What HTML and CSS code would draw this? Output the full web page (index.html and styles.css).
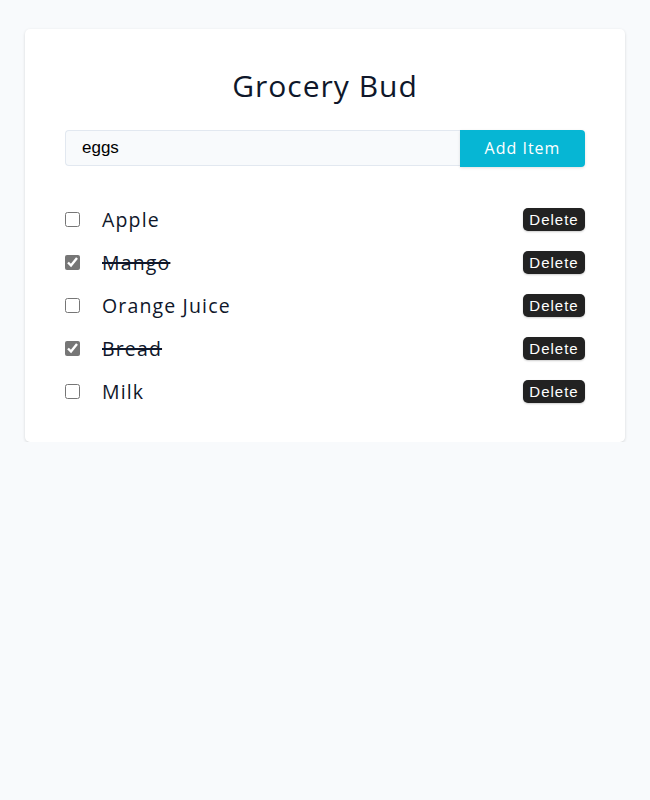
FILE: index.html
```html
<!DOCTYPE html>
<html lang="en">
<head>
<meta charset="utf-8">
<title>Grocery Bud</title>
<link rel="stylesheet" href="styles.css">
</head>
<body>
<main class="card">
  <h1 class="title">Grocery Bud</h1>
  <form class="form">
    <input class="form-input" type="text" value="eggs">
    <button class="btn-add" type="button">Add Item</button>
  </form>
  <ul class="items">
    <li class="item">
      <input type="checkbox" class="check">
      <span class="name">Apple</span>
      <button class="btn-delete" type="button">Delete</button>
    </li>
    <li class="item">
      <input type="checkbox" class="check" checked>
      <span class="name done">Mango</span>
      <button class="btn-delete" type="button">Delete</button>
    </li>
    <li class="item">
      <input type="checkbox" class="check">
      <span class="name">Orange Juice</span>
      <button class="btn-delete" type="button">Delete</button>
    </li>
    <li class="item">
      <input type="checkbox" class="check" checked>
      <span class="name done">Bread</span>
      <button class="btn-delete" type="button">Delete</button>
    </li>
    <li class="item">
      <input type="checkbox" class="check">
      <span class="name">Milk</span>
      <button class="btn-delete" type="button">Delete</button>
    </li>
  </ul>
</main>
</body>
</html>
```
FILE: styles.css
```css
* { box-sizing: border-box; }
body {
  margin: 0;
  background: #f8fafc;
  font-family: "Open Sans", sans-serif;
  color: #0f172a;
}
.card {
  width: 600px;
  margin: 29px auto 0;
  background: #fff;
  border-radius: 5px;
  box-shadow: 0 1px 3px rgba(0,0,0,0.15);
  padding: 38px 40px 29px;
}
.title {
  margin: 0 0 25px;
  text-align: center;
  font-weight: 400;
  font-size: 30px;
  letter-spacing: 1px;
  line-height: 1.25;
  color: #0f172a;
}
.form {
  display: flex;
  margin: 0 0 31px;
}
.form-input {
  flex: 1;
  height: 36px;
  border: 1px solid #e2e8f0;
  border-right: none;
  border-radius: 4px 0 0 4px;
  background: #f8fafc;
  padding: 0 16px;
  font-family: "Liberation Sans", Arial, sans-serif;
  font-size: 17px;
  color: #000;
}
.btn-add {
  width: 125px;
  height: 37px;
  border: none;
  border-radius: 0 4px 4px 0;
  background: #06b6d4;
  color: #fff;
  font-family: "Open Sans", sans-serif;
  font-size: 16px;
  letter-spacing: 1px;
  box-shadow: 0 1px 3px rgba(0,0,0,0.12);
}
.items {
  list-style: none;
  margin: 0;
  padding: 0;
}
.item {
  display: flex;
  align-items: center;
  height: 43px;
}
.check {
  width: 15px;
  height: 15px;
  margin: 0 22px 0 0;
  accent-color: #767676;
}
.name {
  flex: 1;
  font-size: 19.5px;
  letter-spacing: 1.15px;
  color: #0f172a;
}
.name.done {
  text-decoration: line-through;
  text-decoration-thickness: 2px;
}
.btn-delete {
  background: #222;
  color: #fff;
  border: none;
  border-radius: 5px;
  height: 23px;
  width: 62px;
  padding: 0;
  font-family: "Liberation Sans", Arial, sans-serif;
  font-size: 15px;
  letter-spacing: 1px;
  box-shadow: 0 1px 2px rgba(0,0,0,0.2);
}
```
